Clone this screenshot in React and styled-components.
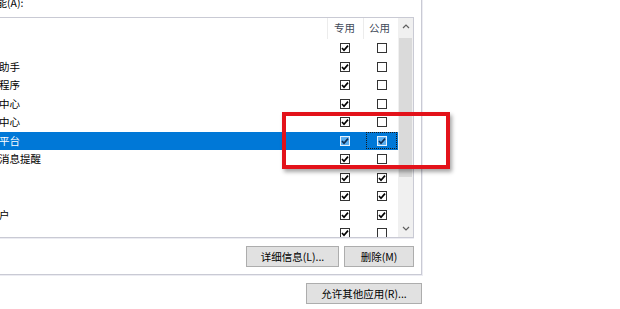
import React from "react";
import styled, { createGlobalStyle } from "styled-components";

const Global = createGlobalStyle`
  html, body { margin: 0; padding: 0; background: #ffffff; overflow: hidden; }
  body { font-family: "Noto Sans CJK SC", "Noto Sans", sans-serif; }
`;

const Root = styled.div`
  position: relative;
  width: 620px;
  height: 309px;
  overflow: hidden;
  background: #ffffff;
`;

const Frame = styled.div`
  margin-left: -87px;
  margin-top: -10px;
  width: 509px;
  display: flex;
  flex-direction: column;
`;

const Panel = styled.div`
  box-sizing: border-box;
  width: 100%;
  padding: 6px 7px 7px 10px;
  border-right: 1px solid #c9cad4;
  border-bottom: 1px solid #c9cad4;
  box-shadow: 1px 1px 0 #ececf2;
  display: flex;
  flex-direction: column;
`;

const Label = styled.div`
  height: 14px;
  line-height: 14px;
  font-size: 10.5px;
  color: #000;
  white-space: nowrap;
`;

const List = styled.div`
  box-sizing: border-box;
  margin-top: 7px;
  height: 221px;
  border: 1px solid #c9cad4;
  box-shadow: 0 1px 0 #ececf2;
  display: flex;
  background: #fff;
`;

const Content = styled.div`
  flex: 1;
  min-width: 0;
  display: flex;
  flex-direction: column;
  overflow: hidden;
`;

const Header = styled.div`
  height: 21px;
  flex: none;
  display: flex;
`;

const HeadName = styled.div`
  flex: 1;
`;

const HeadCol = styled.div`
  box-sizing: border-box;
  width: ${(p) => p.$w}px;
  border-left: 1px solid #ececec;
  padding-left: ${(p) => p.$pad}px;
  padding-bottom: 2px;
  display: flex;
  align-items: center;
  font-size: 10.5px;
  color: #3f4a5a;
  white-space: nowrap;
`;

const Rows = styled.div`
  flex: 1;
  overflow: hidden;
`;

const Row = styled.div`
  height: 18.5px;
  display: flex;
  align-items: center;
  background: ${(p) => (p.$sel ? "#0078d7" : "transparent")};
  color: ${(p) => (p.$sel ? "#ffffff" : "#000000")};
`;

const Name = styled.div`
  flex: 1;
  min-width: 0;
  padding-left: 33px;
  font-size: 10.5px;
  line-height: 18px;
  white-space: nowrap;
  overflow: hidden;
`;

const Cell = styled.div`
  width: ${(p) => p.$w}px;
  height: 100%;
  display: flex;
  align-items: center;
  justify-content: center;
`;

const Focus = styled.span`
  box-sizing: border-box;
  width: 31px;
  height: 17px;
  display: flex;
  align-items: center;
  justify-content: center;
  border: 1px dotted ${(p) => (p.$on ? "#1a1a1a" : "transparent")};
  margin-left: ${(p) => p.$shift}px;
`;

const Box = styled.span`
  box-sizing: border-box;
  width: 10px;
  height: 10px;
  display: inline-flex;
  align-items: center;
  justify-content: center;
  border: 1px solid ${(p) => (p.$sel ? "#e6f2fd" : "#333333")};
  background: ${(p) => (p.$sel ? "#5aaef0" : "#ffffff")};
`;

const Scroll = styled.div`
  width: 15px;
  flex: none;
  display: flex;
  flex-direction: column;
  background: #f0f0f0;
`;

const Arrow = styled.div`
  height: 17px;
  flex: none;
  display: flex;
  align-items: center;
  justify-content: center;
`;

const Thumb = styled.div`
  margin: 3px 1px 0;
  height: 139px;
  background: #dadada;
`;

const Spacer = styled.div`
  flex: 1;
`;

const ButtonRow = styled.div`
  margin-top: 8px;
  display: flex;
  justify-content: flex-end;
  gap: 5px;
`;

const Button = styled.div`
  box-sizing: border-box;
  width: ${(p) => p.$w}px;
  height: 21px;
  border: 1px solid #adadad;
  background: #e1e1e1;
  display: flex;
  align-items: center;
  justify-content: center;
  font-size: 10.5px;
  color: #000;
  white-space: nowrap;
`;

const BottomRow = styled.div`
  margin-top: 8px;
  display: flex;
  justify-content: flex-end;
`;

const Annotation = styled.div`
  position: absolute;
  left: 282px;
  top: 112px;
  width: 168px;
  height: 57px;
  box-sizing: border-box;
  border: 4px solid #e3121a;
  box-shadow: 2px 3px 4px rgba(0, 0, 0, 0.35);
  pointer-events: none;
`;

const rows = [
  { name: "地图", a: true, b: false },
  { name: "微软快速助手", a: true, b: false },
  { name: "应用安装程序", a: true, b: false },
  { name: "微软反馈中心", a: true, b: false },
  { name: "系统安全中心", a: true, b: false },
  { name: "游戏服务平台", a: true, b: true, sel: true },
  { name: "应用通知消息提醒", a: true, b: false },
  { name: "人脉", a: true, b: true },
  { name: "相机", a: true, b: true },
  { name: "邮件和帐户", a: true, b: true },
  { name: "照片", a: true, b: false },
];

function Check({ on, sel }) {
  return (
    <Box $sel={sel}>
      {on && (
        <svg width="8" height="8" viewBox="0 0 8 8">
          <polyline
            points="1,4 3,6.2 7,1.6"
            fill="none"
            stroke={sel ? "#0f2f55" : "#000"}
            strokeWidth="1.7"
          />
        </svg>
      )}
    </Box>
  );
}

function Chevron({ down }) {
  return (
    <svg width="8" height="5" viewBox="0 0 8 5">
      <polyline
        points={down ? "1,1 4,4 7,1" : "1,4 4,1 7,4"}
        fill="none"
        stroke="#606060"
        strokeWidth="1.2"
      />
    </svg>
  );
}

export default function App() {
  return (
    <Root>
      <Global />
      <Frame>
        <Panel>
          <Label>允许的应用和功能(A):</Label>
          <List>
            <Content>
              <Header>
                <HeadName />
                <HeadCol $w={36} $pad={6}>专用</HeadCol>
                <HeadCol $w={35} $pad={5}>公用</HeadCol>
              </Header>
              <Rows>
                {rows.map((r, i) => (
                  <Row key={i} $sel={r.sel}>
                    <Name>{r.name}</Name>
                    <Cell $w={36}>
                      <Focus $shift={0}>
                        <Check on={r.a} sel={r.sel} />
                      </Focus>
                    </Cell>
                    <Cell $w={35}>
                      <Focus $on={r.sel} $shift={2}>
                        <Check on={r.b} sel={r.sel} />
                      </Focus>
                    </Cell>
                  </Row>
                ))}
              </Rows>
            </Content>
            <Scroll>
              <Arrow>
                <Chevron />
              </Arrow>
              <Thumb />
              <Spacer />
              <Arrow>
                <Chevron down />
              </Arrow>
            </Scroll>
          </List>
          <ButtonRow>
            <Button $w={93}>详细信息(L)...</Button>
            <Button $w={70}>删除(M)</Button>
          </ButtonRow>
        </Panel>
        <BottomRow>
          <Button $w={116}>允许其他应用(R)...</Button>
        </BottomRow>
      </Frame>
      <Annotation />
    </Root>
  );
}
